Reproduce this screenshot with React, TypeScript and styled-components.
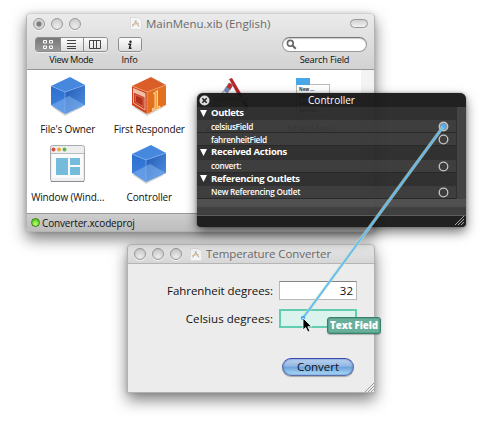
import React from "react";
import styled, { createGlobalStyle } from "styled-components";

const GlobalStyle = createGlobalStyle`
  * { box-sizing: border-box; }
  body {
    margin: 0;
    background: #fff;
    font-family: "Open Sans", "Noto Sans", sans-serif;
    color: #111;
    overflow: hidden;
  }
  svg { display: block; flex: none; }
`;

const Desktop = styled.main`
  position: relative;
  width: 492px;
  height: 423px;
  overflow: hidden;
`;

const Text = styled.span<{ $size: number; $track?: number; $weight?: number }>`
  font-size: ${(p) => p.$size}px;
  letter-spacing: ${(p) => p.$track ?? 0}px;
  font-weight: ${(p) => p.$weight ?? 400};
  line-height: 14px;
  white-space: nowrap;
`;

/* ---------- windows ---------- */

const Win = styled.section`
  position: absolute;
  display: flex;
  flex-direction: column;
  border-radius: 5px 5px 0 0;
  overflow: hidden;
`;

const DocumentWindow = styled(Win)`
  left: 26px;
  top: 13px;
  width: 349px;
  height: 219px;
  border-radius: 5px 5px 4px 4px;
  border: 1px solid #b4b4b4;
  border-top-color: #d2d2d2;
  background: #fff;
  box-shadow: 0 7px 15px rgba(0, 0, 0, 0.5), 0 0 4px rgba(0, 0, 0, 0.12);
`;

const ConverterWindow = styled(Win)`
  left: 127px;
  top: 244px;
  width: 248px;
  height: 149px;
  border: 1px solid #b2b2b2;
  border-top-color: #c8c8c8;
  background: #ececec;
  box-shadow: 0 7px 15px rgba(0, 0, 0, 0.5), 0 0 4px rgba(0, 0, 0, 0.12);
`;

const Header = styled.header`
  height: 56px;
  flex: none;
  display: flex;
  flex-direction: column;
  border-bottom: 1px solid #979797;
  background: linear-gradient(#ebebeb, #d2d2d2);
`;

const TitleBar = styled.div`
  display: flex;
  align-items: center;
  height: 19px;
  padding: 0 6px;
  color: #6a6a6a;
`;

const PlainTitleBar = styled(TitleBar)`
  flex: none;
  height: 19px;
  border-bottom: 1px solid #b5b5b5;
  background: linear-gradient(#ebebeb, #d6d6d6);
`;

const Lights = styled.div`
  display: flex;
  gap: 6px;
`;

const Light = styled.i<{ $dot?: boolean }>`
  width: 12px;
  height: 12px;
  border-radius: 50%;
  border: 1px solid #9a9a9a;
  background: ${(p) =>
    p.$dot
      ? "radial-gradient(circle, #7c7c7c 0 2px, #ccc 3px, #e2e2e2 6px)"
      : "radial-gradient(circle at 50% 75%, #ececec, #c4c4c4)"};
  box-shadow: 0 1px 0 #f7f7f7;
`;

const TitleText = styled.div<{ $gap: number }>`
  display: flex;
  align-items: center;
  gap: 4px;
  margin-left: ${(p) => p.$gap}px;
`;

const ToolbarPill = styled.i`
  width: 18px;
  height: 9px;
  margin-left: auto;
  border: 1px solid #979797;
  border-radius: 5px;
  background: linear-gradient(#d0d0d0, #f2f2f2);
`;

const Toolbar = styled.div`
  display: flex;
  padding: 4px 7px 0 8px;
`;

const ToolItem = styled.div<{ $left?: number; $push?: boolean }>`
  display: flex;
  flex-direction: column;
  align-items: center;
  gap: 1px;
  margin-left: ${(p) => (p.$push ? "auto" : `${p.$left ?? 0}px`)};
`;

const ButtonGroup = styled.div`
  display: flex;
  height: 15px;
  border: 1px solid #8e8e8e;
  border-radius: 3px;
  overflow: hidden;
  box-shadow: 0 1px 0 #eee;
`;

const ToolButton = styled.div<{ $on?: boolean; $narrow?: boolean }>`
  display: flex;
  align-items: center;
  justify-content: center;
  width: ${(p) => (p.$narrow ? 22 : 23.5)}px;
  background: ${(p) => (p.$on ? "linear-gradient(#777, #999)" : "linear-gradient(#fdfdfd, #dedede)")};
  & + & { border-left: 1px solid #8c8c8c; }
`;

const Search = styled.div`
  display: flex;
  align-items: center;
  width: 85px;
  height: 15px;
  padding-left: 3px;
  border: 1px solid #989898;
  border-top-color: #777;
  border-radius: 8px;
  background: #fff;
  box-shadow: inset 0 1px 1px #ccc;
`;

const IconPane = styled.div`
  flex: 1;
  display: grid;
  grid-template-columns: repeat(4, 81.5px);
  grid-template-rows: 68px 75px;
  border-right: 13px solid #f3f3f3;
`;

const IconCell = styled.div`
  display: flex;
  flex-direction: column;
  align-items: center;
  gap: 5px;
  padding-top: 5px;
`;

const StatusBar = styled.footer`
  display: flex;
  align-items: center;
  gap: 2px;
  height: 18px;
  flex: none;
  padding-left: 4px;
  border-top: 1px solid #979797;
  background: linear-gradient(#cdcdcd, #bdbdbd);
`;

const StatusDot = styled.i`
  width: 9px;
  height: 9px;
  border-radius: 50%;
  border: 1px solid #3c801f;
  background: radial-gradient(circle at 50% 70%, #c8ff70, #4cc61c 80%);
`;

/* ---------- connections panel ---------- */

const Panel = styled.section`
  position: absolute;
  left: 197px;
  top: 93px;
  width: 269px;
  height: 134px;
  display: flex;
  flex-direction: column;
  border-radius: 6px 6px 4px 4px;
  overflow: hidden;
  color: #fff;
  background: rgba(28, 28, 28, 0.86);
  box-shadow: 0 5px 12px rgba(0, 0, 0, 0.55), 0 0 3px rgba(0, 0, 0, 0.35);
`;

const PanelTitle = styled.div`
  display: grid;
  grid-template-columns: 14px 1fr 14px;
  align-items: center;
  justify-items: center;
  height: 14px;
  flex: none;
  background: rgba(24, 24, 24, 0.75);
`;

const PanelBody = styled.div`
  display: grid;
  grid-template-columns: 259px 10px;
  height: 92px;
`;

const Rail = styled.div`
  background: rgba(70, 70, 70, 0.7);
  border-left: 1px solid #303030;
`;

const Row = styled.div<{ $group?: boolean }>`
  display: flex;
  align-items: center;
  height: 13.14px;
  padding: ${(p) => (p.$group ? "0 8px 0 3px" : "1px 7px 0 14px")};
  gap: 4px;
  background: ${(p) => (p.$group ? "rgba(46, 46, 46, .75)" : "rgba(62, 62, 62, .8)")};
  border-bottom: 1px solid ${(p) => (p.$group ? "transparent" : "rgba(36, 36, 36, .8)")};
`;

const RingSlot = styled.span`
  margin-left: auto;
`;

const PanelStrip = styled.div`
  height: 17px;
  flex: none;
  border-bottom: 1px solid #5c5c5c;
  background: linear-gradient(rgba(84, 84, 84, 0.85) 0 45%, rgba(64, 64, 64, 0.85) 55%);
`;

const PanelFoot = styled.div`
  flex: 1;
  display: flex;
  justify-content: flex-end;
  align-items: flex-end;
  padding: 0 2px 2px 0;
  background: rgba(24, 24, 24, 0.75);
`;

/* ---------- converter form ---------- */

const Form = styled.div`
  flex: 1;
  display: grid;
  grid-template-columns: 145px 78px;
  grid-template-rows: 19px 19px 39px;
  row-gap: 9px;
  column-gap: 6px;
  padding-top: 17px;
  align-items: center;
  align-content: start;
`;

const FieldLabel = styled.label`
  display: flex;
  justify-content: flex-end;
`;

const Field = styled.div<{ $target?: boolean }>`
  display: flex;
  align-items: center;
  justify-content: flex-end;
  height: 19px;
  padding-right: 3px;
  border: ${(p) => (p.$target ? "2px solid #62cdb0" : "1px solid #b9b9b9")};
  border-top-color: ${(p) => (p.$target ? "#62cdb0" : "#858585")};
  background: ${(p) => (p.$target ? "#daf4ed" : "#fff")};
`;

const PushButton = styled.button`
  grid-column: 2;
  align-self: end;
  justify-self: end;
  display: flex;
  align-items: center;
  justify-content: center;
  width: 72px;
  height: 18px;
  margin-right: 3px;
  padding: 0;
  font-family: inherit;
  color: #111;
  border: 1px solid #5a6da8;
  border-top-color: #3a47ac;
  border-radius: 9px;
  background: linear-gradient(#bdd3ef 0, #91b7e4 45%, #6ba0da 50%, #aedcf8 100%);
  box-shadow: 0 1px 1px rgba(0, 0, 0, 0.3), inset 0 0 2px #4169b5;
`;

const GripCorner = styled.div`
  position: absolute;
  right: 0;
  bottom: 0;
`;

const Overlay = styled.svg`
  position: absolute;
  left: 0;
  top: 0;
  pointer-events: none;
`;

const Tag = styled.div`
  position: absolute;
  left: 327px;
  top: 317px;
  width: 54px;
  height: 17px;
  display: flex;
  align-items: center;
  justify-content: center;
  color: #fff;
  border: 1px solid #38816c;
  border-radius: 3px;
  background: #67ae9b;
  box-shadow: inset 0 0 0 1px #5aa18d, 0 1px 1px rgba(0, 0, 0, 0.25);
`;

/* ---------- drawings ---------- */

const DocIcon = () => (
  <svg width="12" height="13" viewBox="0 0 12 13">
    <path d="M.5 .5h8l3 3v9H.5z" fill="#f5f5f5" stroke="#dedede" />
    <path d="M2.5 9.5l4-6M5 3.5l4 6" stroke="#b4b3af" strokeWidth="1.1" />
    <path d="M2 7.5l7-1" stroke="#dfc096" />
  </svg>
);

const GridGlyph = () => (
  <svg width="12" height="11" viewBox="0 0 12 11" fill="none" stroke="#fff">
    <path d="M1.500 1.500h3v2.500h-3zM7.500 1.500h3v2.500h-3zM1.500 7h3v2.500h-3zM7.500 7h3v2.500h-3z" />
  </svg>
);
const ListGlyph = () => (
  <svg width="11" height="11" viewBox="0 0 11 11" stroke="#444">
    <path d="M1 1.500h9M1 4.500h9M1 7.500h9M1 9.500h9" />
  </svg>
);
const ColumnGlyph = () => (
  <svg width="12" height="11" viewBox="0 0 12 11" fill="none" stroke="#444">
    <path d="M.5 1.500h11v8H.5zM4.500 1.500v8M7.500 1.500v8" />
  </svg>
);
const InfoGlyph = () => (
  <svg width="8" height="10" viewBox="0 0 8 10" fill="none" stroke="#222">
    <circle cx="4.500" cy="1.700" r="1.200" fill="#222" stroke="none" />
    <path d="M2.300 4.200h2.200L3.500 8.300h2" strokeWidth="1.500" />
  </svg>
);
const Magnifier = () => (
  <svg width="11" height="11" viewBox="0 0 11 11" fill="none" stroke="#666">
    <circle cx="4.300" cy="4.300" r="2.900" strokeWidth="1.600" />
    <path d="M6.500 6.500l3.300 3.300" strokeWidth="2" />
  </svg>
);

const Cube = () => (
  <svg width="40" height="42" viewBox="0 0 40 42">
    <defs>
      <linearGradient id="cubeLeft" x1="0" y1="0" x2="0" y2="1">
        <stop offset="0" stopColor="#2d6fcf" />
        <stop offset="1" stopColor="#3f82dc" />
      </linearGradient>
      <linearGradient id="cubeRight" x1="0" y1="0" x2="1" y2="1">
        <stop offset="0" stopColor="#2259b2" />
        <stop offset="1" stopColor="#5393e5" />
      </linearGradient>
    </defs>
    <path d="M4 32l13 9 18-9-16-6z" fill="#777" opacity=".3" />
    <path d="M3 11L17 17V39L3 30z" fill="url(#cubeLeft)" />
    <path d="M17 17L37 10V30L17 39z" fill="url(#cubeRight)" />
    <path d="M3 11L22 2 37 10 17 17z" fill="#4788df" />
    <path d="M3 30L21 21 37 30 17 39z" fill="#8ab9f3" opacity=".5" />
    <path d="M3 11L17 17 37 10M17 17V39" fill="none" stroke="#79abed" strokeWidth=".8" />
  </svg>
);

const ResponderCube = () => (
  <svg width="40" height="42" viewBox="0 0 40 42">
    <path d="M4 32l14 9 17-9z" fill="#777" opacity=".3" />
    <path d="M3 11L18 17V39L3 30z" fill="#cd3f1d" />
    <path d="M18 17L37 10V30L18 39z" fill="#e3701f" />
    <path d="M3 11L22 2 37 10 18 17z" fill="#d95e28" />
    <path d="M3 11L18 17 37 10M18 17V39" fill="none" stroke="#f0a070" strokeWidth=".8" />
    <path d="M4.500 13.500l11.500 5V35L4.500 28z" fill="#c94125" stroke="#f2c2a8" strokeWidth=".9" />
    <path d="M4.500 13.500l11.500 5v4L4.500 17.500z" fill="#f1bfa8" />
    <path d="M6.500 20l7.500 3.300v8L6.500 27z" fill="#b22f1a" stroke="#e0795a" strokeWidth=".7" />
    <path d="M24.500 18.500l4-3V32l2.500-.8v2L23.500 35.500v-2l2.500-.8V19z" fill="#f4a23d" stroke="#ffe3bd" strokeWidth=".8" />
  </svg>
);

const WindowIcon = () => (
  <svg width="40" height="42" viewBox="0 0 40 42">
    <rect x="2.500" y="2.500" width="34" height="36" rx="2" fill="#eee" stroke="#a7abb0" />
    <path d="M3 38.500h33" stroke="#888c92" />
    <path d="M3 10.500h33" stroke="#b8bcc0" />
    <rect x="4" y="11" width="31" height="24" fill="#fafafa" />
    <circle cx="5.500" cy="6.500" r="1.900" fill="#d84c44" />
    <circle cx="11" cy="6.500" r="1.900" fill="#e9ae35" />
    <circle cx="16.500" cy="6.500" r="1.900" fill="#5cb44b" />
    <path d="M8 15h12v17H8zM22 15h10v7H22zM22 24h10v8H22z" fill="#75bbdc" />
  </svg>
);

const AppIcon = () => (
  <svg width="44" height="42" viewBox="0 0 44 42">
    <path d="M20 4l3-1 17 29-3 3z" fill="#b5282b" />
    <path d="M20 8l4 2L9 32l-5 4 1-6z" fill="#e6e6ee" stroke="#777" strokeWidth=".7" />
    <path d="M20 8l4 2-3 5-4-2z" fill="#bb3333" />
    <path d="M17 12l4 2-3 4-3-2z" fill="#7388c4" />
    <path d="M5 24h34" stroke="#bba785" strokeWidth="4" />
  </svg>
);

const MenuIcon = () => (
  <svg width="40" height="42" viewBox="0 0 40 42">
    <rect x="4.500" y="9.500" width="33" height="31" fill="#fff" stroke="#bbb" />
    <rect x="4" y="3" width="14" height="7" fill="#48a7e8" />
    <g fontFamily="Open Sans, sans-serif" fontSize="4.500" fontWeight="700" fill="#333">
      <text x="7" y="16">New ...</text>
      <text x="7" y="23">Open ...</text>
      <text x="7" y="30">Save</text>
      <text x="7" y="37">Save As...</text>
    </g>
  </svg>
);

const CloseGlyph = () => (
  <svg width="11" height="11" viewBox="0 0 11 11">
    <circle cx="5.500" cy="5.500" r="5" fill="#ddd" />
    <path d="M3.300 3.300l4.400 4.400M7.700 3.300L3.300 7.700" stroke="#222" strokeWidth="1.500" />
  </svg>
);
const Triangle = () => (
  <svg width="7" height="7" viewBox="0 0 7 7">
    <path d="M0 0h7L3.500 7z" fill="#fff" />
  </svg>
);
const Ring = ({ on }: { on?: boolean }) => (
  <svg width="11" height="11" viewBox="0 0 11 11">
    <circle cx="5.500" cy="5.500" r="4.300" fill={on ? "#8d989e" : "none"} stroke="#c6c6c6" strokeWidth="1.300" />
    {on && <circle cx="5.500" cy="5.500" r="2.500" fill="#49aef5" />}
  </svg>
);
const Grip = ({ color }: { color: string }) => (
  <svg width="9" height="9" viewBox="0 0 9 9" stroke={color}>
    <path d="M0 9L9 0M3 9L9 3M6 9L9 6" />
  </svg>
);

/* ---------- data ---------- */

type PanelEntry = { text: string; group?: boolean; on?: boolean; size: number; track: number };

const entries: PanelEntry[] = [
  { text: "Outlets", group: true, size: 9.5, track: -0.4 },
  { text: "celsiusField", on: true, size: 8.25, track: -0.3 },
  { text: "fahrenheitField", size: 8.25, track: -0.35 },
  { text: "Received Actions", group: true, size: 9.5, track: -0.25 },
  { text: "convert:", size: 8.25, track: -0.3 },
  { text: "Referencing Outlets", group: true, size: 9.5, track: -0.3 },
  { text: "New Referencing Outlet", size: 8.25, track: -0.27 },
];

const items = [
  { name: "File's Owner", icon: <Cube /> },
  { name: "First Responder", icon: <ResponderCube /> },
  { name: "Application", icon: <AppIcon /> },
  { name: "MainMenu", icon: <MenuIcon /> },
  { name: "Window (Wind…", icon: <WindowIcon /> },
  { name: "Controller", icon: <Cube /> },
];

export default function App() {
  return (
    <>
      <GlobalStyle />
      <Desktop>
        <ConverterWindow>
          <PlainTitleBar>
            <Lights><Light /><Light /><Light /></Lights>
            <TitleText $gap={8}>
              <DocIcon />
              <Text $size={11.5} $track={-0.08}>Temperature Converter</Text>
            </TitleText>
          </PlainTitleBar>
          <Form>
            <FieldLabel><Text $size={11.5} $track={-0.05}>Fahrenheit degrees:</Text></FieldLabel>
            <Field><Text $size={11.5}>32</Text></Field>
            <FieldLabel><Text $size={11.5} $track={0.05}>Celsius degrees:</Text></FieldLabel>
            <Field $target />
            <PushButton><Text $size={11.5}>Convert</Text></PushButton>
          </Form>
          <GripCorner><Grip color="#999" /></GripCorner>
        </ConverterWindow>

        <DocumentWindow>
          <Header>
            <TitleBar>
              <Lights><Light $dot /><Light /><Light /></Lights>
              <TitleText $gap={49}>
                <DocIcon />
                <Text $size={11.5}>MainMenu.xib (English)</Text>
              </TitleText>
              <ToolbarPill />
            </TitleBar>
            <Toolbar>
              <ToolItem>
                <ButtonGroup>
                  <ToolButton $on><GridGlyph /></ToolButton>
                  <ToolButton><ListGlyph /></ToolButton>
                  <ToolButton><ColumnGlyph /></ToolButton>
                </ButtonGroup>
                <Text $size={9.25} $track={-0.4}>View Mode</Text>
              </ToolItem>
              <ToolItem $left={10}>
                <ButtonGroup><ToolButton $narrow><InfoGlyph /></ToolButton></ButtonGroup>
                <Text $size={9.25} $track={-0.2}>Info</Text>
              </ToolItem>
              <ToolItem $push>
                <Search><Magnifier /></Search>
                <Text $size={9.25} $track={-0.2}>Search Field</Text>
              </ToolItem>
            </Toolbar>
          </Header>
          <IconPane>
            {items.map((item) => (
              <IconCell key={item.name}>
                {item.icon}
                <Text $size={10} $track={-0.15}>{item.name}</Text>
              </IconCell>
            ))}
          </IconPane>
          <StatusBar>
            <StatusDot />
            <Text $size={10} $track={-0.15}>Converter.xcodeproj</Text>
          </StatusBar>
        </DocumentWindow>

        <Panel>
          <PanelTitle>
            <CloseGlyph />
            <Text $size={10} $weight={500}>Controller</Text>
          </PanelTitle>
          <PanelBody>
            <div>
              {entries.map((e) => (
                <Row key={e.text} $group={e.group}>
                  {e.group && <Triangle />}
                  <Text $size={e.size} $track={e.track} $weight={e.group ? 700 : 600}>{e.text}</Text>
                  {!e.group && <RingSlot><Ring on={e.on} /></RingSlot>}
                </Row>
              ))}
            </div>
            <Rail />
          </PanelBody>
          <PanelStrip />
          <PanelFoot><Grip color="#aaa" /></PanelFoot>
        </Panel>

        <Tag><Text $size={9.75} $weight={800} $track={-0.1}>Text Field</Text></Tag>

        <Overlay width="492" height="423" viewBox="0 0 492 423">
          <path d="M443 127L303 318" stroke="#b9e4c6" strokeWidth="3.200" opacity=".7" />
          <path d="M443 127L303 318" stroke="#66b8f8" strokeWidth="1.700" />
          <circle cx="303" cy="318" r="2.200" fill="#4ba9f0" />
          <path d="M303 318v12l2.700-2.500 2.200 4.500 2-1-2.100-4.300h3.800z" fill="#000" stroke="#fff" strokeWidth=".8" />
        </Overlay>
      </Desktop>
    </>
  );
}
